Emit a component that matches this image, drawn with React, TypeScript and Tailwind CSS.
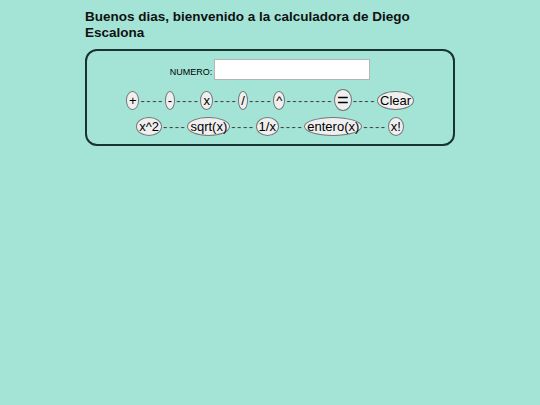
import React from "react";

const btn =
  "rounded-[50%] border border-[#767676] bg-[#efefef] text-[13px] leading-[15px] px-[2px] py-[1px] text-black";

function Dash({ n = 4 }: { n?: number }) {
  return (
    <span className="text-[13px] leading-none tracking-[1.5px] px-[1px] text-[#444]">
      {"-".repeat(n)}
    </span>
  );
}

export default function App() {
  return (
    <div className="min-h-screen bg-[#a3e4d7] font-['Liberation_Sans',Arial,sans-serif] text-black">
      <div className="w-[370px] mx-auto pt-[9px]">
        <h1 className="text-[13.5px] font-bold leading-[16px] text-[#111]">
          Buenos dias, bienvenido a la calculadora de Diego Escalona
        </h1>
        <div className="mt-[8px] border-2 border-[#1b332e] rounded-[12px] pt-[8px] pb-[8px]">
          <div className="flex items-end justify-center">
            <span className="text-[9px] leading-none mb-[3px] mr-[2px]">NUMERO:</span>
            <input
              type="text"
              className="w-[156px] h-[21px] bg-white border border-[#b5b5b5] outline-none"
            />
          </div>
          <div className="flex items-center justify-center mt-[9px] h-[22px]">
            <button className={btn}>+</button>
            <Dash />
            <button className={btn}>-</button>
            <Dash />
            <button className={btn}>x</button>
            <Dash />
            <button className={btn}>/</button>
            <Dash />
            <button className={btn}>^</button>
            <Dash n={8} />
            <button className="rounded-[50%] border border-[#767676] bg-[#efefef] text-[20px] leading-[20px] px-[2px] py-[0px] h-[22px] text-black">
              =
            </button>
            <Dash />
            <button className={btn}>Clear</button>
          </div>
          <div className="flex items-center justify-center mt-[6px] h-[19px]">
            <button className={btn}>x^2</button>
            <Dash />
            <button className={btn}>sqrt(x)</button>
            <Dash />
            <button className={btn}>1/x</button>
            <Dash />
            <button className={btn}>entero(x)</button>
            <Dash />
            <button className={btn}>x!</button>
          </div>
        </div>
      </div>
    </div>
  );
}
